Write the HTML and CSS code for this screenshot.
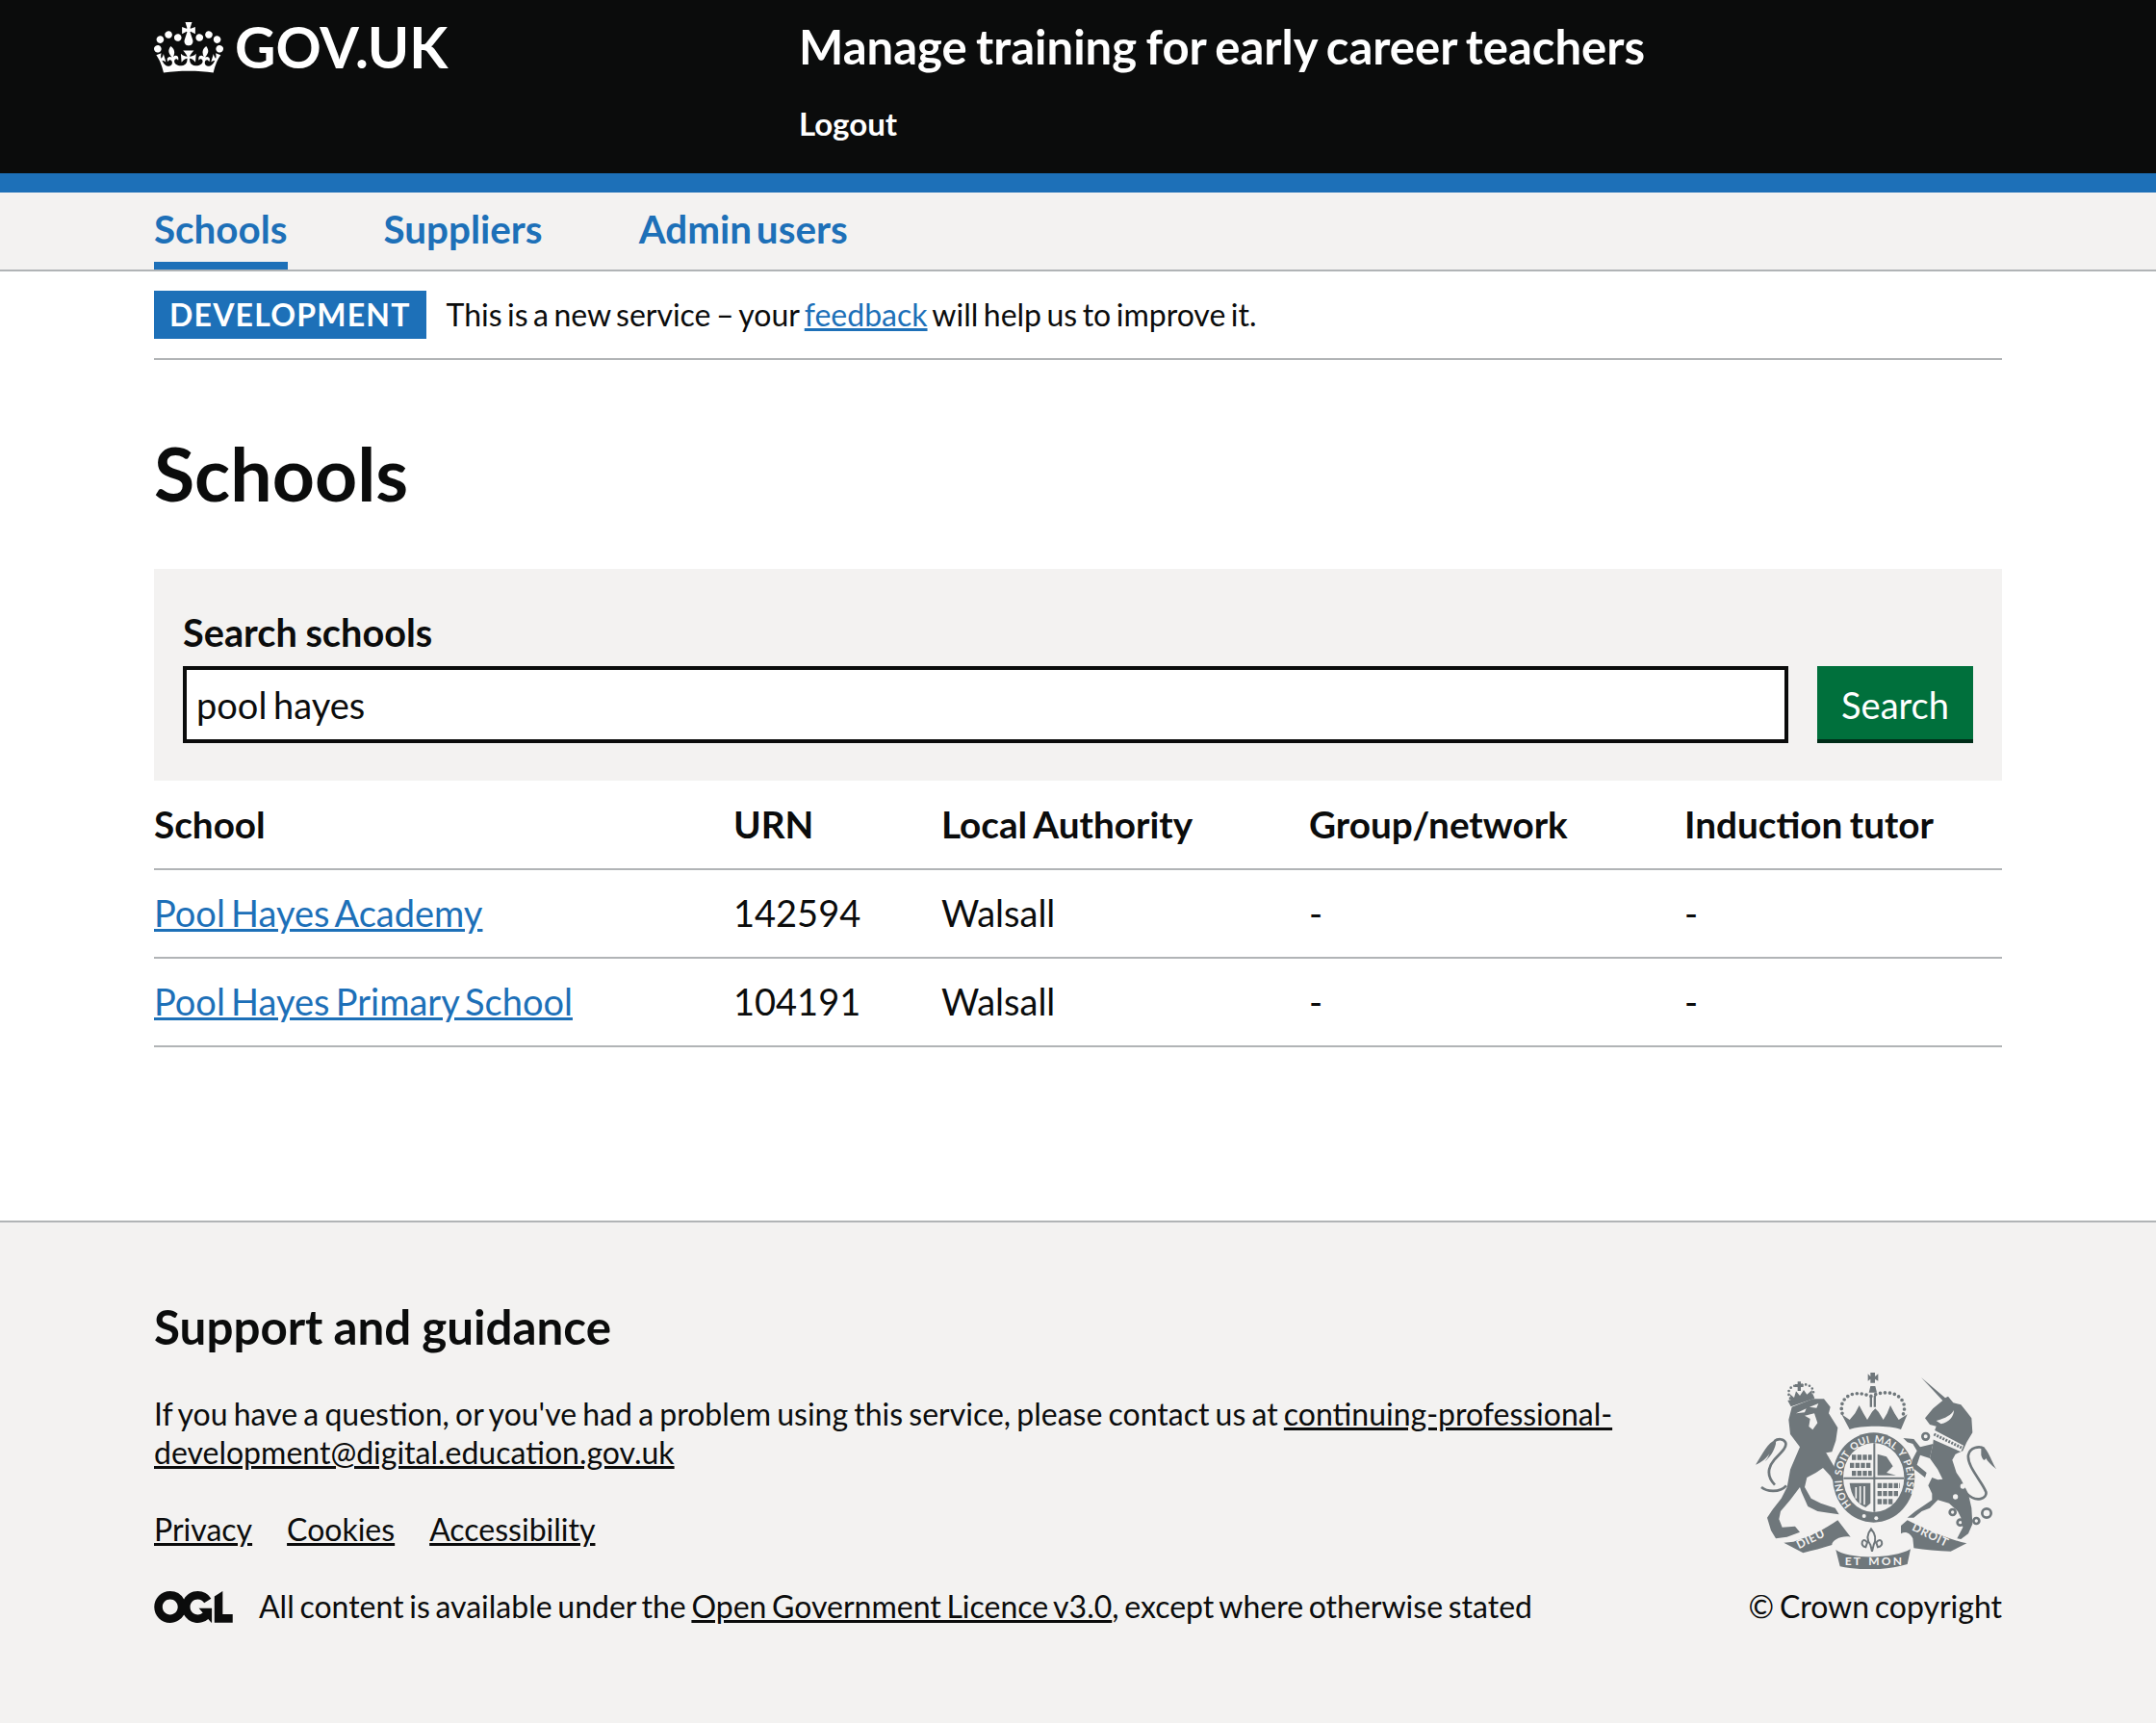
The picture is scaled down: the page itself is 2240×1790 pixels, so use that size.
FILE: index.html
```html
<!DOCTYPE html>
<html lang="en">
<head>
    <meta charset="utf-8">
    <title>Schools - Manage training for early career teachers</title>
    <link rel="stylesheet" href="styles.css">
</head>
<body>
<header class="header">
    <div class="container header-inner">
        <a class="logo" href="#">
            <svg class="crown" viewBox="0 0 132 97" aria-hidden="true">
                <path fill="currentColor" fill-rule="evenodd" d="M25 30.2c3.5 1.5 7.7-.2 9.1-3.7 1.5-3.6-.2-7.8-3.9-9.2-3.6-1.4-7.6.3-9.1 3.9-1.4 3.5.3 7.5 3.9 9zM9 39.5c3.6 1.5 7.8-.2 9.2-3.7 1.5-3.6-.2-7.8-3.9-9.1-3.6-1.5-7.6.2-9.1 3.8-1.4 3.5.3 7.5 3.8 9zM4.4 57.2c3.5 1.5 7.7-.2 9.1-3.8 1.5-3.6-.2-7.7-3.9-9.1-3.5-1.5-7.6.3-9.1 3.8-1.4 3.5.3 7.6 3.9 9.1zm38.3-21.4c3.5 1.5 7.7-.2 9.1-3.8 1.5-3.6-.2-7.7-3.9-9.1-3.6-1.5-7.6.3-9.1 3.8-1.3 3.6.4 7.7 3.9 9.1zm64.4-5.6c-3.6 1.5-7.8-.2-9.1-3.7-1.5-3.6.2-7.8 3.8-9.2 3.6-1.4 7.7.3 9.2 3.9 1.3 3.5-.4 7.5-3.9 9zm15.9 9.3c-3.6 1.5-7.7-.2-9.1-3.7-1.5-3.6.2-7.8 3.7-9.1 3.6-1.5 7.7.2 9.2 3.8 1.5 3.5-.3 7.5-3.8 9zm4.7 17.7c-3.6 1.5-7.8-.2-9.2-3.8-1.5-3.6.2-7.7 3.9-9.1 3.6-1.5 7.7.3 9.2 3.8 1.3 3.5-.4 7.6-3.9 9.1zM89.3 35.8c-3.6 1.5-7.8-.2-9.2-3.8-1.4-3.6.2-7.7 3.9-9.1 3.6-1.5 7.7.3 9.2 3.8 1.4 3.6-.3 7.7-3.9 9.1zM69.7 17.7l8.9 4.7V9.3l-8.9 2.8c-.2-.3-.5-.6-.9-.9L72.4 0H59.6l3.5 11.2c-.3.3-.6.5-.9.9l-8.8-2.8v13.1l8.8-4.7c.3.3.6.7.9.9l-5 15.4v.1c-.2.8-.4 1.6-.4 2.4 0 4.1 3.1 7.5 7 8.1h.2c.3 0 .7.1 1 .1.4 0 .7 0 1-.1h.2c4-.6 7.1-4.1 7.1-8.1 0-.8-.1-1.7-.4-2.4V34l-5.1-15.4c.4-.2.7-.6 1-.9zM66 92.8c16.9 0 32.8 1.1 47.1 3.2 4-16.9 8.9-26.7 14-33.5l-9.6-3.4c1 4.9 1.1 7.2 0 10.2-1.5-1.4-3-4.3-4.2-8.7L108.6 76c2.8-2 5-3.2 7.5-3.3-4.4 9.4-10 11.9-13.6 11.2-4.3-.8-6.3-4.6-5.6-7.9 1-4.7 5.7-5.9 8-.5 4.3-8.7-3-11.4-7.6-8.8 7.1-7.2 7.9-13.5 2.1-21.1-8 6.1-8.1 12.3-4.5 20.8-4.7-5.4-12.1-2.5-9.5 6.2 3.4-5.2 7.9-2 7.2 3.1-.6 4.3-6.4 7.8-13.5 7.2-10.3-.9-10.9-8-11.2-13.8 2.5-.5 7.1 1.8 11 7.3L80.2 60c-4.1 4.4-8 5.3-12.3 5.4 1.4-4.4 8-11.6 8-11.6H55.5s6.4 7.2 7.9 11.6c-4.2-.1-8-1-12.3-5.4l1.4 16.4c3.9-5.5 8.5-7.7 10.9-7.3-.3 5.8-.9 12.8-11.1 13.8-7.2.6-12.9-2.9-13.5-7.2-.7-5 3.8-8.3 7.1-3.1 2.7-8.7-4.6-11.6-9.4-6.2 3.7-8.5 3.6-14.7-4.6-20.8-5.8 7.6-5 13.9 2.2 21.1-4.7-2.6-11.9.1-7.7 8.8 2.3-5.5 7.1-4.2 8.1.5.7 3.3-1.3 7.1-5.7 7.9-3.5.7-9-1.8-13.5-11.2 2.5.1 4.7 1.3 7.5 3.3l-4.7-15.4c-1.2 4.4-2.7 7.2-4.3 8.7-1.1-3-.9-5.3 0-10.2l-9.5 3.4c5 6.9 9.9 16.7 14 33.5 14.8-2.1 30.8-3.2 47.7-3.2z"></path>
            </svg>
            <span>GOV.UK</span>
        </a>
        <div class="service">
            <a class="service-name" href="#">Manage training for early career teachers</a>
            <a class="logout" href="#">Logout</a>
        </div>
    </div>
</header>

<nav class="primary-nav">
    <ul class="container nav-list">
        <li><a class="nav-link active" href="#">Schools</a></li>
        <li><a class="nav-link" href="#">Suppliers</a></li>
        <li><a class="nav-link" href="#">Admin users</a></li>
    </ul>
</nav>

<div class="container">
    <div class="phase-banner">
        <strong class="tag">DEVELOPMENT</strong>
        <span>This is a new service – your <a href="#">feedback</a> will help us to improve it.</span>
    </div>

    <main class="main">
        <h1>Schools</h1>

        <form class="search-panel">
            <label for="search">Search schools</label>
            <div class="search-row">
                <input id="search" type="text" value="pool hayes">
                <button class="btn" type="button">Search</button>
            </div>
        </form>

        <table class="table">
            <thead>
            <tr>
                <th class="col-school">School</th>
                <th class="col-urn">URN</th>
                <th class="col-la">Local Authority</th>
                <th class="col-group">Group/network</th>
                <th>Induction tutor</th>
            </tr>
            </thead>
            <tbody>
            <tr>
                <td><a href="#">Pool Hayes Academy</a></td>
                <td>142594</td>
                <td>Walsall</td>
                <td>-</td>
                <td>-</td>
            </tr>
            <tr>
                <td><a href="#">Pool Hayes Primary School</a></td>
                <td>104191</td>
                <td>Walsall</td>
                <td>-</td>
                <td>-</td>
            </tr>
            </tbody>
        </table>
    </main>
</div>

<footer class="footer">
    <div class="container footer-inner">
        <div class="footer-meta">
            <h2>Support and guidance</h2>
            <p class="contact">If you have a question, or you've had a problem using this service, please contact us at <a href="#">continuing-professional-development@digital.education.gov.uk</a></p>
            <ul class="footer-links">
                <li><a href="#">Privacy</a></li>
                <li><a href="#">Cookies</a></li>
                <li><a href="#">Accessibility</a></li>
            </ul>
            <div class="licence">
                <svg class="ogl" viewBox="0 0 483.2 195.7" aria-hidden="true">
                    <path fill="currentColor" d="M421.5 142.8V.1l-50.7 32.3v161.1h112.4v-50.7zm-122.3-9.6A47.12 47.12 0 0 1 221 97.8c0-26 21.1-47.1 47.1-47.1 16.7 0 31.4 8.7 39.7 21.8l42.7-27.2A97.63 97.63 0 0 0 268.1 0c-36.5 0-68.3 20.1-85.1 49.7A98 98 0 0 0 97.8 0C43.9 0 0 43.9 0 97.8s43.9 97.8 97.8 97.8c36.5 0 68.3-20.1 85.1-49.7a97.76 97.76 0 0 0 149.6 25.4l19.4 22.2h3v-87.8h-80l24.3 27.5zM97.8 145c-26 0-47.1-21.1-47.1-47.1s21.1-47.1 47.1-47.1 47.2 21 47.2 47S123.8 145 97.8 145"></path>
                </svg>
                <span>All content is available under the <a href="#">Open Government Licence v3.0</a>, except where otherwise stated</span>
            </div>
        </div>
        <div class="footer-copy">
            <svg class="arms" viewBox="0 0 780 630" aria-hidden="true">
                <defs>
                    <path id="garter" d="M312 432A102 114 0 1 1 447 438"/>
                </defs>
                <g class="arms-fill">
                    <!-- lion -->
                    <path d="M125 125 190 100 225 100 245 125 240 145 262 180 268 190 262 230 250 265 232 268 270 320 290 345 285 375 262 372 245 340 222 315 200 330 172 345 165 375 185 410 215 425 260 440 272 460 240 455 205 450 175 435 155 390 150 375 120 415 90 450 85 475 95 500 135 497 150 515 110 530 75 535 60 510 48 470 65 445 92 410 110 375 120 320 150 250 120 210 115 165Z"/>
                    <path d="M75 228C50 235 35 270 12 305 30 300 50 280 55 270 50 285 45 290 40 295 55 285 70 262 75 240Z"/>
                    <path d="M112 105 190 84 196 98 122 124Z"/>
                    <path d="M118 84 132 96 138 76 150 90 162 72 172 86 188 72 188 90 125 108Z"/>
                    <path d="M143 46h10v8h8v9h-8v12h-10v-12h-8v-9h8z"/>
                    <!-- unicorn -->
                    <g transform="translate(390 0)">
                        <path d="M138 33 213 97 222 92 238 112 262 118 280 140 295 160 298 205 280 235 268 262 245 272 235 290 248 330 262 350 285 395 295 440 298 490 285 520 262 537 250 535 268 500 262 470 252 450 225 425 190 415 165 440 140 450 115 470 95 470 120 450 150 430 172 415 172 395 160 370 172 345 190 352 205 350 190 320 165 285 175 240 178 205 185 185 165 180 150 160 175 130 205 105Z"/>
                        <path d="M175 240 135 250 115 225 82 222 95 235 112 240 125 262 110 290 108 312 150 345 155 330 125 305 135 275 165 285Z"/>
                        <path d="M325 248C345 250 355 290 372 318 355 305 345 295 340 285 335 295 330 290 325 275Z"/>
                        <!-- DROIT ribbon -->
                        <path d="M75 495 95 478C150 505 215 535 280 550L230 575C190 575 150 570 115 565L112 535C105 520 90 510 75 520Z"/>
                    </g>
                    <!-- crown -->
                    <path d="M280 148 305 165 322 145 335 120 348 145 360 165 375 140 385 130 395 140 410 165 422 145 432 120 445 145 458 165 485 148 465 195C430 182 340 182 305 195Z"/>
                    <path d="M362 22 370 30V18H384V30L394 22V44L384 38V50H370V38L362 44ZM368 90H375V125H368ZM380 90H387V125H380ZM370 60H385L390 80H365Z"/>
                    <!-- ribbons -->
                    <path d="M100 548 130 545C180 530 230 505 268 478L308 530C280 525 250 540 250 555 220 565 190 572 160 580Z"/>
                    <path d="M262 570C300 600 440 600 495 568L485 615C420 635 340 635 275 622Z"/>
                </g>
                <g class="arms-line">
                    <path d="M108 370C85 395 45 388 30 375M72 368C50 345 45 320 70 290 90 268 112 250 105 235 98 222 80 224 70 232"/>
                    <g transform="translate(390 0)">
                        <path d="M280 395C310 425 345 410 340 390 330 360 280 310 285 275 290 250 320 245 335 255"/>
                        <circle cx="236" cy="453" r="9"/>
                        <circle cx="260" cy="485" r="9"/>
                        <circle cx="310" cy="480" r="9"/>
                        <circle cx="342" cy="456" r="14"/>
                        <circle cx="152" cy="217" r="10"/>
                    </g>
                    <path class="fleur" d="M372 505C385 520 390 535 380 555L375 575 370 555C355 535 360 520 372 505ZM360 548C345 525 335 560 355 562ZM388 548C405 525 415 560 393 562Z"/>
                    <path class="dots" d="M282 145C270 105 305 65 370 92 440 60 490 100 472 148"/>
                    <path class="dots-small" d="M120 98C105 72 125 55 150 58 175 48 195 65 192 85"/>
                </g>
                <!-- holes in the silhouettes -->
                <g class="arms-bg">
                    <path d="M138 145 170 130 165 142ZM180 125 208 114 202 128ZM165 152 195 145 205 175 190 196 178 186 182 162Z"/>
                    <path d="M230 265 275 322 262 320Z"/>
                    <path d="M305 205C340 185 430 185 460 205L450 222H315Z"/>
                    <g transform="translate(390 0)">
                        <path d="M185 168C215 160 232 150 240 135 240 155 225 172 200 178Z"/>
                        <path d="M175 195 270 245 262 265 172 225Z"/>
                        <circle cx="268" cy="372" r="8"/>
                        <circle cx="245" cy="405" r="8"/>
                        <circle cx="275" cy="325" r="10"/>
                        <circle cx="143" cy="303" r="10"/>
                    </g>
                </g>
                <path class="collar" d="M568 210 654 252"/>
                <ellipse class="arms-fill" cx="380" cy="345" rx="128" ry="140"/>
                <ellipse class="arms-bg" cx="380" cy="345" rx="95" ry="108"/>
                <path class="arms-cross" d="M382 238V452M286 347H474"/>
                <g class="arms-quarter">
                    <path d="M312 300H374M306 325H374M312 350H374" transform="translate(0 -18)"/>
                    <path d="M392 272 420 280 440 310 420 330 450 338H392Z" class="rampant"/>
                    <path d="M392 370H462M392 395H458M392 420H440"/>
                </g>
                <path class="harp" d="M305 362H370V425L355 438C325 425 310 400 305 362Z"/>
                <path class="harp-strings" d="M325 375V410M338 372V425M351 372V430"/>
                <circle class="arms-bg" cx="350" cy="465" r="6"/>
                <circle class="arms-bg" cx="388" cy="472" r="6"/>
                <text class="arms-text"><textPath href="#garter" startOffset="2">HONI SOIT QUI MAL Y PENSE</textPath></text>
                <text class="arms-ribbon" transform="translate(147 568) rotate(-26)">DIEU</text>
                <text class="arms-ribbon" x="290" y="618" textLength="180">ET MON</text>
                <text class="arms-ribbon" transform="translate(497 508) rotate(26)">DROIT</text>
            </svg>
            <a class="copyright" href="#">© Crown copyright</a>
        </div>
    </div>
</footer>
</body>
</html>
```

FILE: styles.css
```css
* {
    box-sizing: border-box;
    margin: 0;
    padding: 0;
}

body {
    color: #0b0c0c;
    font: normal 32px/40px Lato, "Noto Sans", sans-serif;
    word-spacing: -2.5px;
}

a {
    color: #1d70b8;
}

ul {
    list-style: none;
}

.container {
    width: 1920px;
    margin: 0 auto;
}

/* header */
.header {
    height: 200px;
    background: #0b0c0c;
    border-bottom: 20px solid #1d70b8;
}

.header-inner {
    display: flex;
}

.header a {
    color: #fff;
    text-decoration: none;
    font-weight: 700;
}

.logo {
    display: flex;
    align-items: center;
    gap: 12px;
    width: 670px;
    height: 98px;
    font-size: 58.5px;
}

.logo span {
    padding-bottom: 3px;
}

.crown {
    width: 72px;
    height: 53px;
}

.service {
    display: flex;
    flex-direction: column;
    padding-top: 18px;
}

.service-name {
    font-size: 49px;
    line-height: 60px;
}

.logout {
    margin-top: 30px;
    font-size: 33px;
    line-height: 40px;
}

/* navigation */
.primary-nav {
    height: 82px;
    background: #f3f2f1;
    border-bottom: 2px solid #b1b4b6;
}

.nav-list {
    display: flex;
    gap: 100px;
}

.nav-link {
    display: block;
    height: 80px;
    padding-top: 13px;
    font-size: 40.4px;
    line-height: 50px;
    font-weight: 700;
    text-decoration: none;
    word-spacing: -5px;
}

.nav-link.active {
    border-bottom: 8px solid #1d70b8;
}

/* phase banner */
.phase-banner {
    display: flex;
    align-items: center;
    gap: 21px;
    height: 92px;
    border-bottom: 2px solid #b1b4b6;
    word-spacing: -2.7px;
}

.tag {
    padding: 5px 16px;
    background: #1d70b8;
    color: #fff;
    letter-spacing: 1.2px;
    line-height: 40px;
}

/* page body */
.main {
    padding-top: 72px;
    padding-bottom: 180px;
}

h1 {
    font-size: 77px;
    line-height: 90px;
    margin-bottom: 55px;
}

.search-panel {
    height: 220px;
    padding: 41px 30px 0;
    background: #f3f2f1;
}

.search-panel label {
    display: block;
    font-size: 39.7px;
    line-height: 50px;
    font-weight: 700;
    margin-bottom: 10px;
    word-spacing: -1px;
}

.search-row {
    display: flex;
    gap: 30px;
}

.search-row input {
    flex: 1;
    height: 80px;
    padding: 0 10px;
    border: 4px solid #0b0c0c;
    color: #0b0c0c;
    font: inherit;
    font-size: 38px;
    word-spacing: -3px;
}

.btn {
    width: 162px;
    height: 80px;
    border: 0;
    background: #00703c;
    box-shadow: inset 0 -4px 0 #002d18;
    color: #fff;
    font: inherit;
    font-size: 38px;
}

.table {
    width: 100%;
    border-collapse: collapse;
    table-layout: fixed;
    font-size: 38px;
    word-spacing: -3.5px;
}

.table th, .table td {
    height: 92px;
    padding-bottom: 2px;
    text-align: left;
    border-bottom: 2px solid #b1b4b6;
}

.table th {
    font-size: 38.7px;
    word-spacing: -2px;
}

.col-school {
    width: 602px;
}

.col-urn {
    width: 216px;
}

.col-la {
    width: 382px;
}

.col-group {
    width: 390px;
}

/* footer */
.footer {
    height: 523px;
    padding-top: 78px;
    background: #f3f2f1;
    border-top: 2px solid #b1b4b6;
}

.footer a {
    color: #0b0c0c;
}

.footer-inner {
    display: flex;
    justify-content: space-between;
    align-items: flex-end;
}

.footer-meta {
    width: 1560px;
}

.footer-meta h2 {
    font-size: 49.3px;
    line-height: 60px;
    margin-bottom: 41px;
    word-spacing: -1px;
}

.contact {
    word-spacing: -2px;
}

.footer-links {
    display: flex;
    gap: 36px;
    margin-top: 40px;
}

.licence {
    display: flex;
    align-items: center;
    gap: 27px;
    margin-top: 40px;
}

.ogl {
    width: 82px;
    height: 33px;
}

.footer-copy {
    display: flex;
    flex-direction: column;
    align-items: flex-end;
}

.arms {
    width: 260px;
    height: 210px;
    margin-bottom: 19px;
}

.copyright {
    text-decoration: none;
}

/* royal arms */
.arms-fill {
    fill: #6f777b;
}

.arms-line {
    fill: none;
    stroke: #6f777b;
    stroke-width: 8;
}

.arms-line .dots {
    stroke-width: 11;
    stroke-linecap: round;
    stroke-dasharray: 0 15;
}

.arms-line .dots-small {
    stroke-width: 8;
    stroke-linecap: round;
    stroke-dasharray: 0 12;
}

.arms-line .fleur {
    stroke-width: 6;
}

.arms-bg {
    fill: #f3f2f1;
}

.collar {
    fill: none;
    stroke: #6f777b;
    stroke-width: 9;
    stroke-dasharray: 6 4;
}

.arms-cross {
    fill: none;
    stroke: #6f777b;
    stroke-width: 6;
}

.arms-quarter {
    fill: none;
    stroke: #6f777b;
    stroke-width: 16;
    stroke-dasharray: 13 4;
}

.arms-quarter .rampant {
    fill: #6f777b;
    stroke: none;
}

.harp {
    fill: #6f777b;
}

.harp-strings {
    fill: none;
    stroke: #f3f2f1;
    stroke-width: 5;
}

.arms-text, .arms-ribbon {
    fill: #f3f2f1;
    font-size: 31px;
    font-weight: 700;
    letter-spacing: 1px;
    word-spacing: 4px;
}

.arms-ribbon {
    font-size: 36px;
    letter-spacing: 2px;
}
```
